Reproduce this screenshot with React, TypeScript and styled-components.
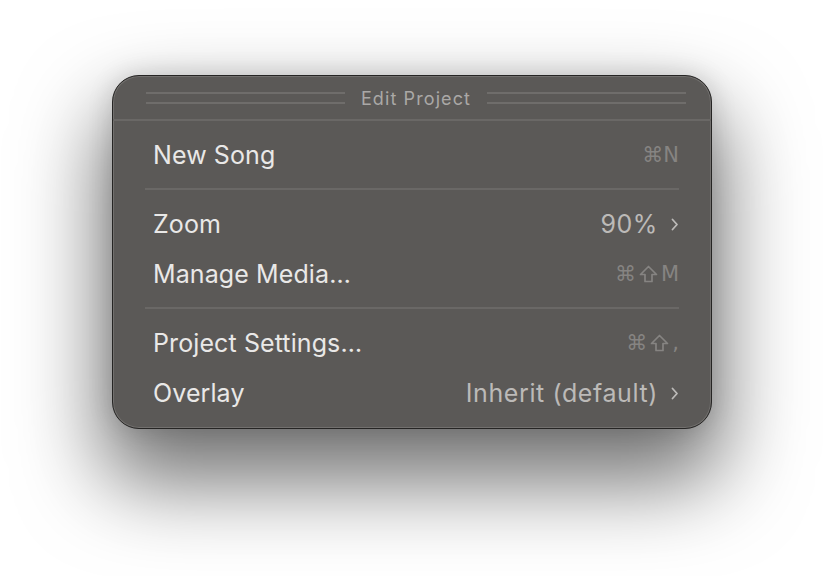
import * as React from 'react';
import styled, { createGlobalStyle } from 'styled-components';

const GlobalStyle = createGlobalStyle`
  html, body {
    margin: 0;
    padding: 0;
    background: #ffffff;
  }
  body {
    font-family: Inter, "Noto Sans", "DejaVu Sans", sans-serif;
    -webkit-font-smoothing: antialiased;
  }
`;

const Page = styled.div`
  width: 824px;
  height: 576px;
  padding: 75px 0 0 112px;
  box-sizing: border-box;
`;

const Menu = styled.div`
  width: 600px;
  box-sizing: border-box;
  background: #5b5957;
  border: 1px solid #262524;
  border-radius: 27px;
  box-shadow:
    inset 0 0 0 1px #72706e,
    0 44px 84px 10px rgba(0, 0, 0, 0.55),
    0 0 26px rgba(0, 0, 0, 0.14);
  overflow: hidden;
`;

const TitleBar = styled.div`
  height: 43px;
  display: flex;
  align-items: center;
  gap: 16px;
  padding: 0 25px 0 33px;
  border-bottom: 2px solid #6a6866;
`;

const Grip = styled.div`
  flex: 1;
  height: 8px;
  border-top: 2px solid #6f6d6b;
  border-bottom: 2px solid #6f6d6b;
`;

const Title = styled.span`
  font-size: 18px;
  letter-spacing: 1.1px;
  color: #aaa8a6;
  padding-top: 2px;
`;

const List = styled.div`
  padding: 9px 0 10px;
`;

const Row = styled.div`
  height: 50px;
  display: flex;
  align-items: center;
  justify-content: space-between;
  padding: 0 32px 0 40px;
`;

const Label = styled.span`
  font-size: 25px;
  color: #e9e8e7;
  letter-spacing: 0.1px;
`;

const Value = styled.span`
  display: flex;
  align-items: center;
  gap: 13px;
  font-size: 25px;
  color: #bcbab8;
  letter-spacing: 0.6px;
`;

const Shortcut = styled.span`
  display: flex;
  align-items: center;
  gap: 3px;
  font-size: 21px;
  color: #868482;
  font-family: "DejaVu Sans", Inter, sans-serif;
`;

const Separator = styled.div`
  height: 2px;
  margin: 8px 32px 9px 32px;
  background: #6a6866;
`;

const Chevron = () => (
  <svg width="8" height="13" viewBox="0 0 8 13">
    <path d="M1.5 1.5 L6 6.5 L1.5 11.5" fill="none" stroke="#bcbab8" strokeWidth="1.8" strokeLinecap="round" strokeLinejoin="round" />
  </svg>
);

const ShiftIcon = () => (
  <svg width="19" height="18" viewBox="0 0 19 18">
    <path
      d="M9.5 1.5 L17.5 9.5 H13 V16.5 H6 V9.5 H1.5 Z"
      fill="none"
      stroke="#868482"
      strokeWidth="1.7"
      strokeLinejoin="round"
    />
  </svg>
);

export default function App() {
  return (
    <>
      <GlobalStyle />
      <Page>
        <Menu>
          <TitleBar>
            <Grip />
            <Title>Edit Project</Title>
            <Grip />
          </TitleBar>
          <List>
            <Row>
              <Label>New Song</Label>
              <Shortcut>⌘N</Shortcut>
            </Row>
            <Separator />
            <Row>
              <Label>Zoom</Label>
              <Value>
                90%
                <Chevron />
              </Value>
            </Row>
            <Row>
              <Label>Manage Media…</Label>
              <Shortcut>
                ⌘<ShiftIcon />M
              </Shortcut>
            </Row>
            <Separator />
            <Row>
              <Label>Project Settings…</Label>
              <Shortcut>
                ⌘<ShiftIcon />,
              </Shortcut>
            </Row>
            <Row>
              <Label>Overlay</Label>
              <Value>
                Inherit (default)
                <Chevron />
              </Value>
            </Row>
          </List>
        </Menu>
      </Page>
    </>
  );
}
